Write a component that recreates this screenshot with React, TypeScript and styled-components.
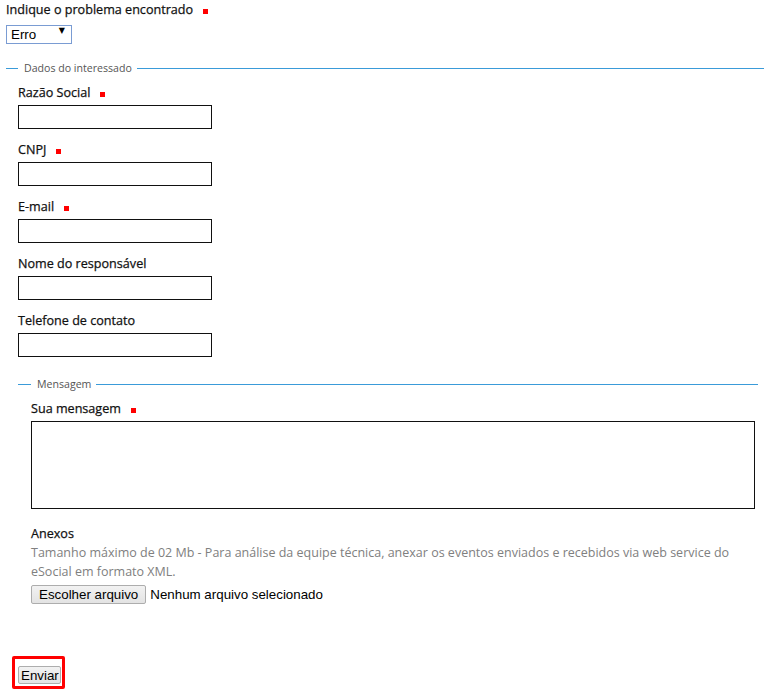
import React from "react";
import styled, { createGlobalStyle } from "styled-components";

const Global = createGlobalStyle`
  html, body { margin: 0; padding: 0; background: #fff; }
  body { font-family: "Open Sans", "Liberation Sans", sans-serif; color: #111; }
  * { box-sizing: border-box; }
`;

const Page = styled.form`
  display: flex;
  flex-direction: column;
  padding: 1px 0 0 6px;
  width: 764px;
`;

const Label = styled.label`
  display: flex;
  align-items: center;
  font-size: 12.6px;
  font-weight: 400;
  line-height: 18px;
  color: #111;
  margin-bottom: 3px;
  -webkit-text-stroke: 0.25px #111;
`;

const Required = styled.span`
  display: inline-block;
  width: 5px;
  height: 5px;
  background: #f00;
  margin-left: 10px;
  margin-top: 3px;
`;

const SelectWrap = styled.div`
  position: relative;
  width: 66px;
  height: 19px;
`;

const Select = styled.select`
  appearance: none;
  width: 66px;
  height: 19px;
  border: 1px solid #7a9cd3;
  border-radius: 0;
  background: #fff;
  font-family: "Liberation Sans", Arial, sans-serif;
  font-size: 13.33px;
  color: #000;
  padding: 0 0 0 4px;
  margin: 0;
`;

const Arrow = styled.span`
  position: absolute;
  right: 7px;
  top: 4px;
  font-size: 8px;
  line-height: 10px;
  color: #000;
  pointer-events: none;
  font-family: "DejaVu Sans", sans-serif;
`;

const Fieldset = styled.fieldset<{ $ml?: number; $mr?: number; $mt?: number; $pl: number }>`
  margin: ${(p) => p.$mt ?? 0}px ${(p) => p.$mr ?? 0}px 0 ${(p) => p.$ml ?? 0}px;
  padding: 0 0 0 ${(p) => p.$pl}px;
  border: none;
  border-top: 1px solid #3a9bd9;
  min-width: 0;
`;

const Legend = styled.legend<{ $ml: number }>`
  margin-left: ${(p) => p.$ml}px;
  padding: 0 5px 0 6px;
  font-size: 10.6px;
  line-height: 14px;
  color: #555;
`;

const Stack = styled.div<{ $gap: number; $top: number }>`
  display: flex;
  flex-direction: column;
  gap: ${(p) => p.$gap}px;
  padding-top: ${(p) => p.$top}px;
`;

const Field = styled.div`
  display: flex;
  flex-direction: column;
`;

const TextInput = styled.input`
  width: 194px;
  height: 24px;
  border: 1px solid #111;
  margin: 0;
  padding: 0 4px;
  font-family: "Open Sans", sans-serif;
  font-size: 13px;
`;

const TextArea = styled.textarea`
  width: 724px;
  height: 88px;
  border: 1px solid #111;
  margin: 0;
  padding: 4px;
  resize: none;
  font-family: "Open Sans", sans-serif;
  font-size: 13px;
`;

const Attach = styled.div`
  display: flex;
  flex-direction: column;
  padding: 16px 0 0 25px;
`;

const AttachTitle = styled.div`
  font-size: 12.6px;
  line-height: 18px;
  color: #111;
  -webkit-text-stroke: 0.25px #111;
`;

const Hint = styled.div`
  font-size: 12.5px;
  line-height: 19px;
  color: #808080;
  width: 728px;
`;

const FileRow = styled.div`
  display: flex;
  align-items: center;
  gap: 4px;
  margin-top: 4px;
  font-family: "Liberation Sans", Arial, sans-serif;
  font-size: 13.33px;
  color: #000;
`;

const NativeButton = styled.button`
  height: 19px;
  padding: 0 7px;
  border: 1px solid #adadad;
  border-radius: 2px;
  background: linear-gradient(#f2f2f2, #e3e3e3);
  font-family: "Liberation Sans", Arial, sans-serif;
  font-size: 13.33px;
  line-height: 17px;
  color: #000;
  margin: 0;
`;

const SubmitBox = styled.div`
  align-self: flex-start;
  margin: 52px 0 0 6px;
  border: 3px solid #f00;
  border-radius: 2px;
  padding: 7px 1px 2px 3px;
  display: flex;
`;

const SubmitButton = styled(NativeButton)`
  height: 18px;
  padding: 0 2px;
  width: 43px;
`;

const Top = styled.div`
  display: flex;
  flex-direction: column;
  margin-bottom: 20px;
`;

const fields = [
  { label: "Razão Social", req: true },
  { label: "CNPJ", req: true },
  { label: "E-mail", req: true },
  { label: "Nome do responsável", req: false },
  { label: "Telefone de contato", req: false },
];

export default function App() {
  return (
    <>
      <Global />
      <Page onSubmit={(e) => e.preventDefault()}>
        <Top>
          <Label>
            Indique o problema encontrado <Required />
          </Label>
          <SelectWrap>
            <Select defaultValue="Erro">
              <option>Erro</option>
              <option>Sugestão</option>
            </Select>
            <Arrow>▼</Arrow>
          </SelectWrap>
        </Top>
        <Fieldset $pl={12}>
          <Legend $ml={0}>Dados do interessado</Legend>
          <Stack $gap={12} $top={9}>
            {fields.map((f) => (
              <Field key={f.label}>
                <Label>
                  {f.label}
                  {f.req && <Required />}
                </Label>
                <TextInput type="text" />
              </Field>
            ))}
          </Stack>
        </Fieldset>
        <Fieldset $ml={12} $mr={6} $mt={20} $pl={13}>
          <Legend $ml={0}>Mensagem</Legend>
          <Stack $gap={0} $top={9}>
            <Field>
              <Label>
                Sua mensagem <Required />
              </Label>
              <TextArea />
            </Field>
          </Stack>
        </Fieldset>
        <Attach>
          <AttachTitle>Anexos</AttachTitle>
          <Hint>
            Tamanho máximo de 02 Mb - Para análise da equipe técnica, anexar os eventos enviados e
            recebidos via web service do eSocial em formato XML.
          </Hint>
          <FileRow>
            <NativeButton type="button">Escolher arquivo</NativeButton>
            <span>Nenhum arquivo selecionado</span>
          </FileRow>
        </Attach>
        <SubmitBox>
          <SubmitButton type="submit">Enviar</SubmitButton>
        </SubmitBox>
      </Page>
    </>
  );
}
